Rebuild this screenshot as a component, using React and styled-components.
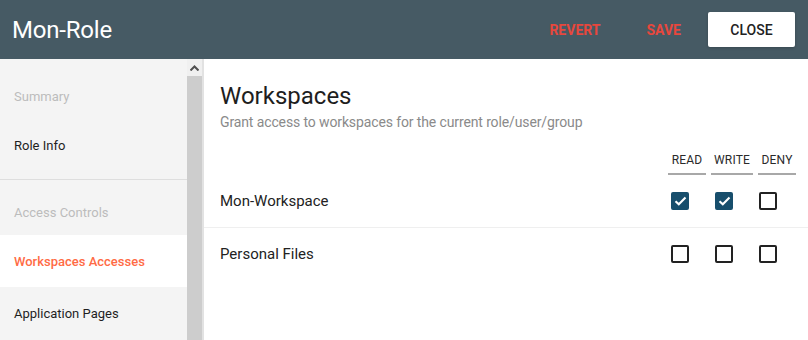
import React from 'react';
import styled, { createGlobalStyle } from 'styled-components';

const GlobalStyle = createGlobalStyle`
  html, body {
    margin: 0;
    padding: 0;
    background: #ffffff;
    font-family: Roboto, "Liberation Sans", sans-serif;
    overflow: hidden;
  }
`;

const Page = styled.div`
  width: 808px;
  height: 340px;
  display: flex;
  flex-direction: column;
`;

const TopBar = styled.header`
  height: 59px;
  background: #465a64;
  display: flex;
  align-items: center;
  padding: 0 13px 0 12px;
  flex-shrink: 0;
`;

const Title = styled.div`
  color: #ffffff;
  font-size: 24px;
  letter-spacing: -0.2px;
  flex: 1;
`;

const TextButton = styled.button`
  background: none;
  border: none;
  color: #e8473d;
  font-family: Roboto, "Liberation Sans", sans-serif;
  font-weight: 700;
  font-size: 14px;
  padding: 0 16px;
  height: 35px;
  margin-right: ${p => p.gap}px;
`;

const CloseButton = styled.button`
  width: 87px;
  height: 35px;
  background: #ffffff;
  border: none;
  border-radius: 2px;
  color: #222222;
  font-family: Roboto, "Liberation Sans", sans-serif;
  font-weight: 500;
  font-size: 14px;
  box-shadow: 0 1px 3px rgba(0,0,0,0.2);
`;

const Body = styled.div`
  flex: 1;
  display: flex;
  min-height: 0;
`;

const Side = styled.nav`
  width: 187px;
  background: #f4f4f4;
  font-size: 13px;
`;

const Section = styled.div`
  padding: ${p => p.pad};
  border-bottom: ${p => (p.divided ? '1px solid #dedede' : 'none')};
`;

const GroupLabel = styled.div`
  color: #bcbcbc;
  padding: 24px 14px 13px;
  line-height: 18px;
`;

const NavItem = styled.div`
  height: 52px;
  display: flex;
  align-items: center;
  padding-left: 14px;
  color: ${p => (p.active ? '#ff6b45' : '#1f1f1f')};
  background: ${p => (p.active ? '#ffffff' : 'transparent')};
  font-weight: ${p => (p.active ? 500 : 400)};
`;

const ScrollBar = styled.div`
  width: 15px;
  background: #f0f0f0;
  border-right: 2px solid #e2e2e2;
  display: flex;
  flex-direction: column;
`;

const ScrollArrow = styled.div`
  height: 17px;
  display: flex;
  align-items: center;
  justify-content: center;
`;

const ScrollThumb = styled.div`
  flex: 1;
  background: #cdcdcd;
`;

const Main = styled.main`
  flex: 1;
  padding-top: 20px;
`;

const Intro = styled.div`
  padding: 0 12px 0 16px;
`;

const Heading = styled.h1`
  margin: 0;
  font-size: 24px;
  font-weight: 400;
  color: #1e1e1e;
  line-height: 34px;
`;

const Subtitle = styled.div`
  font-size: 14px;
  color: #8a8a8a;
  line-height: 18px;
  letter-spacing: -0.12px;
`;

const ColumnHeads = styled.div`
  display: flex;
  justify-content: flex-end;
  gap: 5px;
  padding: 0 12px 0 16px;
  margin-top: 14px;
`;

const ColHead = styled.div`
  width: ${p => p.w}px;
  font-size: 12px;
  color: #2a2a2a;
  text-align: center;
  padding: 8px 0 6px;
  border-bottom: 2px solid #a8a8a8;
  letter-spacing: 0.2px;
`;

const Row = styled.div`
  height: 52px;
  display: flex;
  align-items: center;
  padding: 0 18px 0 16px;
  border-bottom: ${p => (p.last ? 'none' : '1px solid #efefef')};
`;

const RowName = styled.div`
  flex: 1;
  font-size: 15px;
  color: #222222;
`;

const CheckCell = styled.div`
  width: 44px;
  display: flex;
  justify-content: center;
`;

const Box = styled.span`
  width: 18px;
  height: 18px;
  box-sizing: border-box;
  border-radius: 2px;
  border: 2px solid ${p => (p.checked ? '#174e6c' : '#222222')};
  background: ${p => (p.checked ? '#174e6c' : '#ffffff')};
  display: inline-flex;
  align-items: center;
  justify-content: center;
`;

const Check = ({ on }) => (
  <Box checked={on}>
    {on && (
      <svg width="13" height="10" viewBox="0 0 13 10">
        <path d="M1.5 5.2 L4.8 8.3 L11.5 1.6" fill="none" stroke="#ffffff" strokeWidth="2.1" />
      </svg>
    )}
  </Box>
);

const columns = [
  { label: 'READ', w: 38 },
  { label: 'WRITE', w: 42 },
  { label: 'DENY', w: 38 },
];

const rows = [
  { name: 'Mon-Workspace', perms: [true, true, false] },
  { name: 'Personal Files', perms: [false, false, false] },
];

const App = () => (
  <Page>
    <GlobalStyle />
    <TopBar>
      <Title>Mon-Role</Title>
      <TextButton gap={14}>REVERT</TextButton>
      <TextButton gap={11}>SAVE</TextButton>
      <CloseButton>CLOSE</CloseButton>
    </TopBar>
    <Body>
      <Side>
        <Section pad="5px 0 8px" divided>
          <GroupLabel>Summary</GroupLabel>
          <NavItem>Role Info</NavItem>
        </Section>
        <Section pad="0">
          <GroupLabel>Access Controls</GroupLabel>
          <NavItem active>Workspaces Accesses</NavItem>
          <NavItem>Application Pages</NavItem>
        </Section>
      </Side>
      <ScrollBar>
        <ScrollArrow>
          <svg width="9" height="6" viewBox="0 0 9 6">
            <path d="M0.5 5.5 L4.5 1.5 L8.5 5.5" fill="none" stroke="#505050" strokeWidth="2" />
          </svg>
        </ScrollArrow>
        <ScrollThumb />
      </ScrollBar>
      <Main>
        <Intro>
          <Heading>Workspaces</Heading>
          <Subtitle>Grant access to workspaces for the current role/user/group</Subtitle>
        </Intro>
        <ColumnHeads>
          {columns.map(c => (
            <ColHead key={c.label} w={c.w}>{c.label}</ColHead>
          ))}
        </ColumnHeads>
        {rows.map((r, i) => (
          <Row key={r.name} last={i === rows.length - 1}>
            <RowName>{r.name}</RowName>
            {r.perms.map((p, j) => (
              <CheckCell key={j}>
                <Check on={p} />
              </CheckCell>
            ))}
          </Row>
        ))}
      </Main>
    </Body>
  </Page>
);

export default App;
